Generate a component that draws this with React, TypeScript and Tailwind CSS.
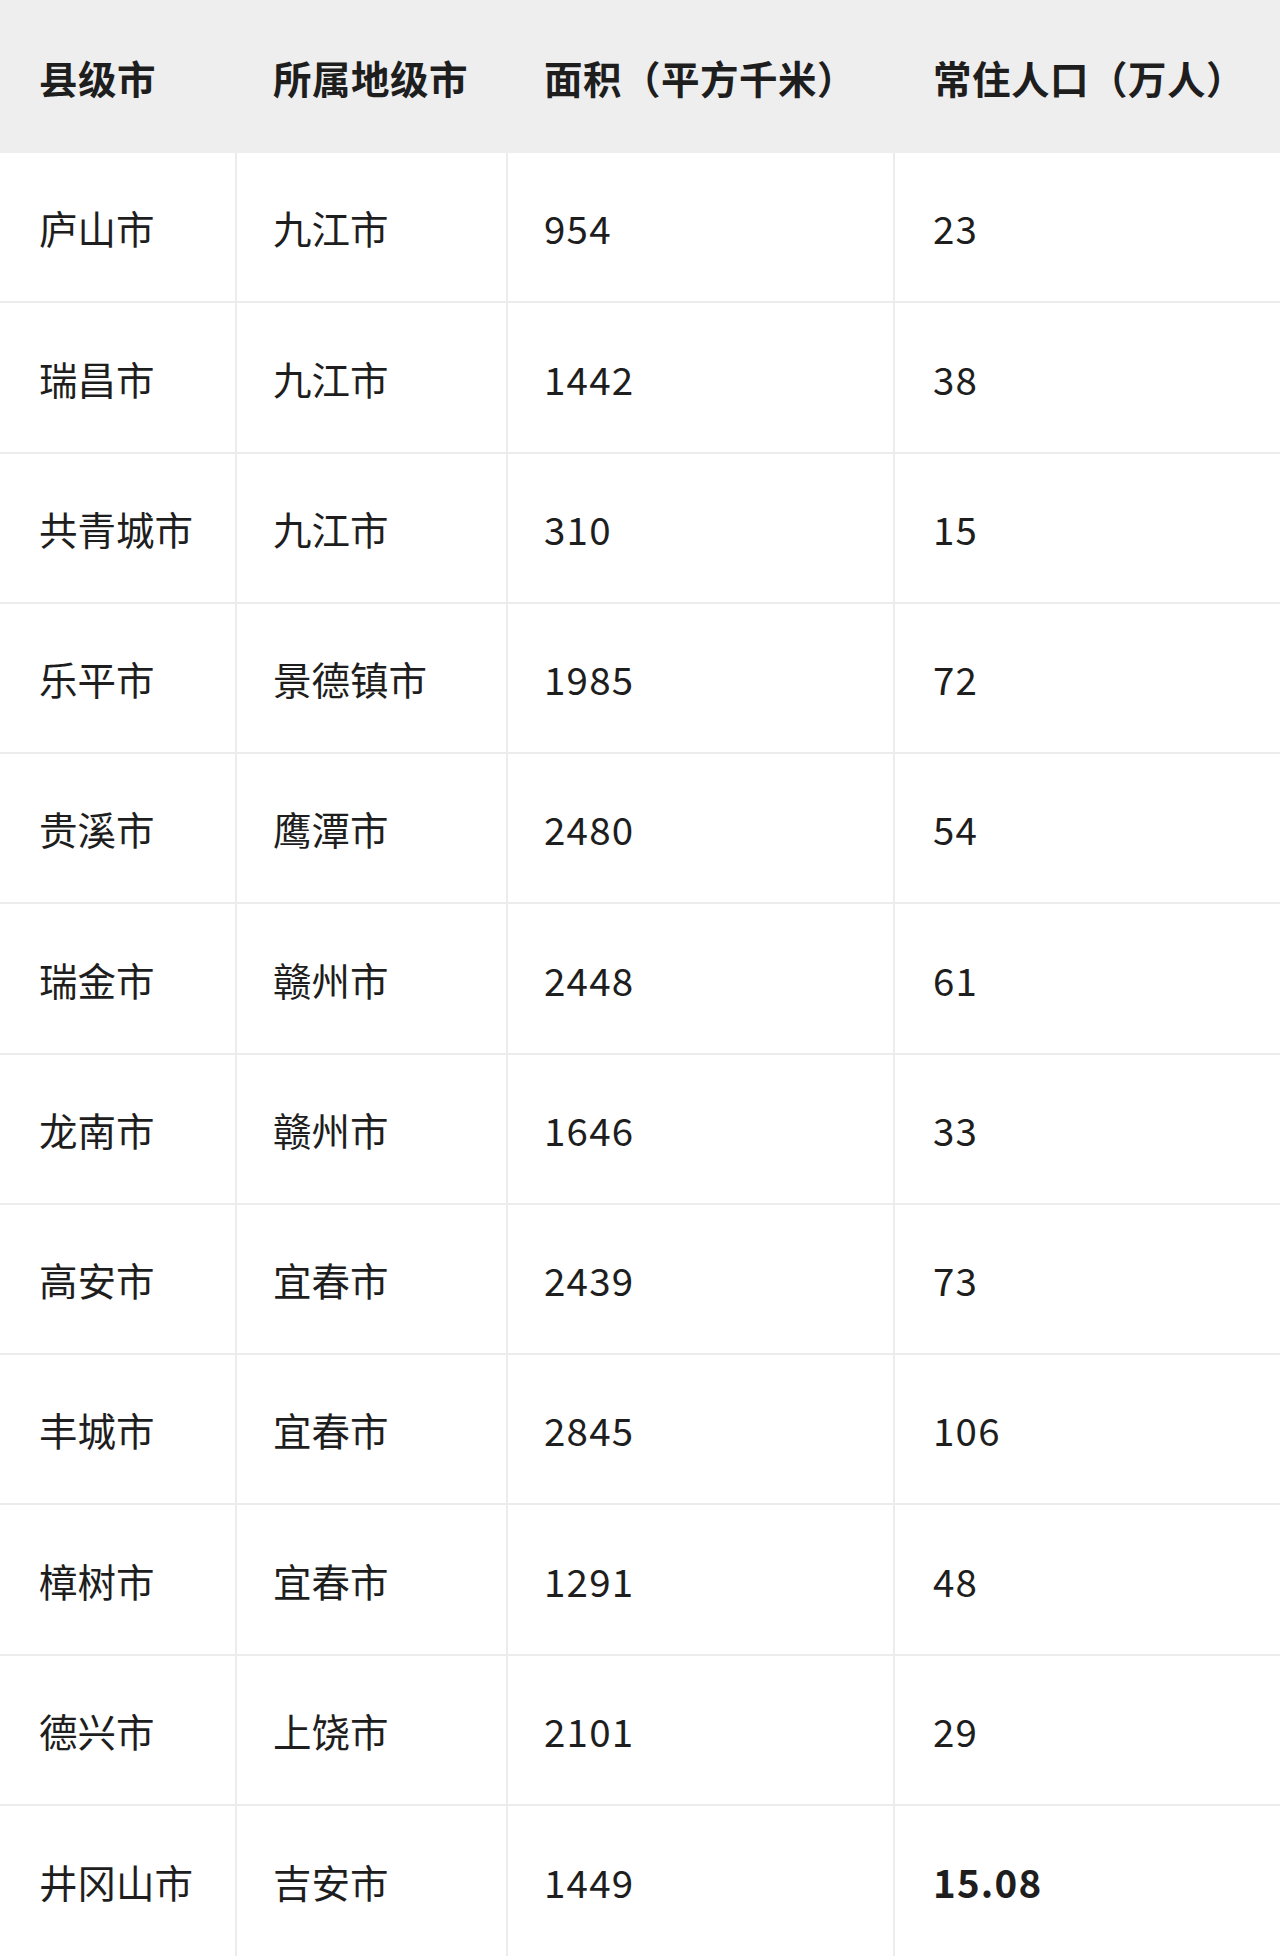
const HEADERS = ["县级市", "所属地级市", "面积（平方千米）", "常住人口（万人）"];

const ROWS: [string, string, string, string][] = [
  ["庐山市", "九江市", "954", "23"],
  ["瑞昌市", "九江市", "1442", "38"],
  ["共青城市", "九江市", "310", "15"],
  ["乐平市", "景德镇市", "1985", "72"],
  ["贵溪市", "鹰潭市", "2480", "54"],
  ["瑞金市", "赣州市", "2448", "61"],
  ["龙南市", "赣州市", "1646", "33"],
  ["高安市", "宜春市", "2439", "73"],
  ["丰城市", "宜春市", "2845", "106"],
  ["樟树市", "宜春市", "1291", "48"],
  ["德兴市", "上饶市", "2101", "29"],
  ["井冈山市", "吉安市", "1449", "15.08"],
];

const GRID = "grid grid-cols-[235px_271px_387px_1fr]";
// header padding per column (no vertical rules in the header)
const HEAD_PAD = ["pl-[39px]", "pl-[38px]", "pl-[38px]", "pl-[40px]"];
// body padding per column (cols 2-4 carry a 2px left rule)
const BODY_PAD = ["pl-[39px]", "pl-[36px]", "pl-[36px]", "pl-[38px]"];

export default function App() {
  return (
    <div
      className="w-[1280px] bg-white text-[#1e1e1e]"
      style={{ fontFamily: '"Noto Sans CJK SC", "Noto Sans", sans-serif' }}
    >
      <div className={`${GRID} h-[153px] bg-[#eeeeee]`}>
        {HEADERS.map((h, i) => (
          <div
            key={h}
            className={`flex items-center ${HEAD_PAD[i]} pt-[2px] text-[38.5px] font-bold tracking-[0.5px] whitespace-nowrap`}
          >
            {h}
          </div>
        ))}
      </div>

      {ROWS.map((row, ri) => {
        const last = ri === ROWS.length - 1;
        return (
          <div
            key={row[0]}
            className={`${GRID} h-[150.25px] ${last ? "" : "border-b-2 border-[#ececec]"}`}
          >
            {row.map((cell, ci) => (
              <div
                key={ci}
                className={`flex items-center pt-[2px] text-[38.5px] whitespace-nowrap ${BODY_PAD[ci]} ${
                  ci > 0 ? "border-l-2 border-[#ececec]" : ""
                } ${ci > 1 ? "tracking-[1.2px]" : ""} ${last && ci === 3 ? "font-bold" : ""}`}
              >
                {cell}
              </div>
            ))}
          </div>
        );
      })}
    </div>
  );
}
